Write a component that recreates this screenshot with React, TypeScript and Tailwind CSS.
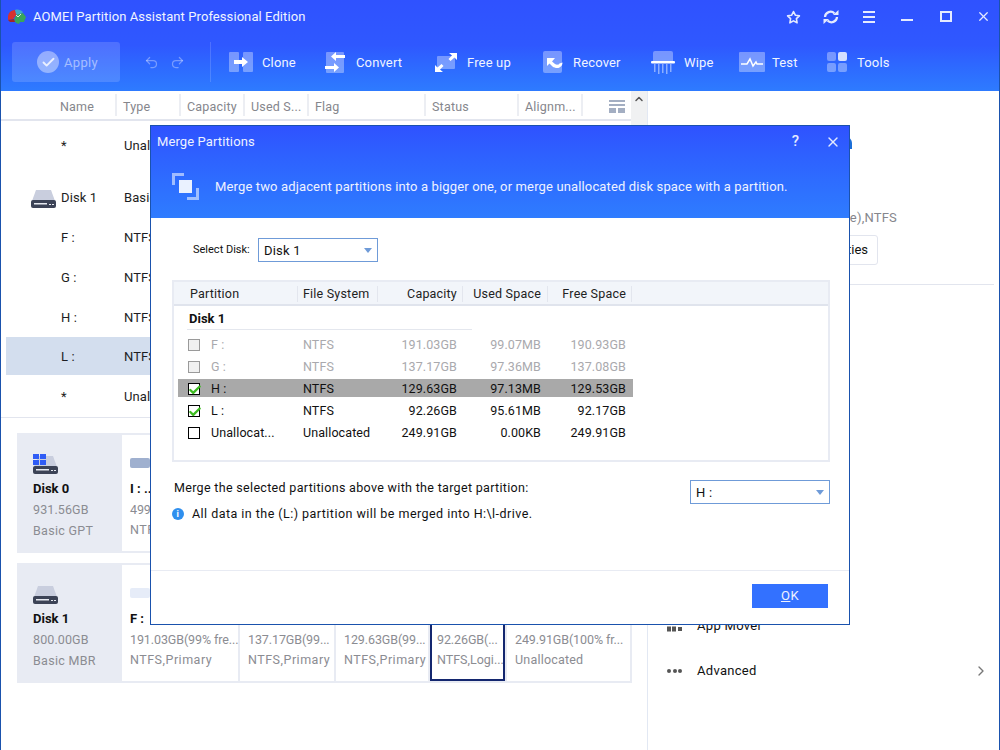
import React from "react";
import { Check, ChevronRight, ChevronUp, Redo2, Undo2, X } from "lucide-react";

const FONT = "font-['Roboto','Liberation_Sans',sans-serif]";

function Logo() {
  return (
    <svg width="20" height="16" viewBox="0 0 20 16" className="ml-[7px]">
      <path d="M1 8C1 4 4 1 8 1l2 4-4 5-5 1z" fill="#d8322f" />
      <path d="M8 1c3-1 6 0 8 2l-4 4-3-2z" fill="#3fa7c9" />
      <path d="M9 6l7-2 3 4-2 5-4 0-1 2-3-1-2-3z" fill="#3aa55a" />
      <path d="M1 11l6-1 1 3H3z" fill="#a32527" />
      <path d="M9 6l2 2 3-3" fill="none" stroke="#fff" strokeWidth="0.8" />
    </svg>
  );
}

function CloneIcon() {
  return (
    <svg width="24" height="20" viewBox="0 0 24 20">
      <rect x="0" y="0" width="10" height="20" rx="1" fill="#fff" fillOpacity="0.35" />
      <rect x="14" y="0" width="10" height="20" rx="1" fill="#fff" fillOpacity="0.35" />
      <path d="M5 8h8V5l6 5-6 5v-3H5z" fill="#fff" />
    </svg>
  );
}

function ConvertIcon() {
  return (
    <svg width="20" height="22" viewBox="0 0 20 22">
      <rect x="1" y="1" width="18" height="21" rx="1" fill="#fff" fillOpacity="0.35" />
      <path d="M20 4h-9V1L6 5.500 11 10V7h9z" fill="#fff" />
      <path d="M0 15h9v-3l5 4.500L9 21v-3H0z" fill="#fff" />
    </svg>
  );
}

function FreeUpIcon() {
  return (
    <svg width="22" height="19" viewBox="0 0 22 19">
      <rect x="2" y="3" width="18" height="13" rx="1" fill="#fff" fillOpacity="0.35" />
      <path d="M14 0h8v7l-2.500-2.500-4 3.500-2-2 3.500-3.500z" fill="#fff" />
      <path d="M8 19H0v-7l2.500 2.500 4-3.500 2 2L5 16.500z" fill="#fff" />
    </svg>
  );
}

function RecoverIcon() {
  return (
    <svg width="20" height="22" viewBox="0 0 20 22">
      <rect x="0" y="0" width="19" height="22" rx="2" fill="#fff" fillOpacity="0.35" />
      <path d="M4 7v8l2.500-2.500 3 3c2 1.500 5 2 7 1 2-1 3-3 3-5l-3 1c-1 1.500-3 1.500-4.500.5l-3-2.500L12 7z" fill="#fff" />
    </svg>
  );
}

function WipeIcon() {
  return (
    <svg width="24" height="23" viewBox="0 0 24 23">
      <path d="M2 2a2 2 0 0 1 2-2h16a2 2 0 0 1 2 2v8H2z" fill="#fff" fillOpacity="0.35" />
      <rect x="0" y="10" width="24" height="2.500" rx="1" fill="#fff" />
      <g fill="#fff" fillOpacity="0.45">
        <rect x="3" y="13" width="1.500" height="8" />
        <rect x="7" y="13" width="1.500" height="10" />
        <rect x="11" y="13" width="1.500" height="9" />
        <rect x="15" y="13" width="1.500" height="10" />
        <rect x="19" y="13" width="1.500" height="8" />
      </g>
    </svg>
  );
}

function TestIcon() {
  return (
    <svg width="26" height="20" viewBox="0 0 26 20">
      <rect x="0" y="0" width="26" height="20" rx="1" fill="#fff" fillOpacity="0.35" />
      <path d="M2 12h6l3-5 3 7 3-4 1 2h6" fill="none" stroke="#fff" strokeWidth="1.500" />
    </svg>
  );
}

function ToolsIcon() {
  return (
    <svg width="20" height="20" viewBox="0 0 20 20">
      <rect x="0" y="0" width="9" height="9" rx="2" fill="#fff" fillOpacity="0.35" />
      <rect x="11" y="0" width="9" height="9" rx="2" fill="#fff" fillOpacity="0.8" />
      <rect x="0" y="11" width="9" height="9" rx="2" fill="#fff" fillOpacity="0.35" />
      <rect x="11" y="11" width="9" height="9" rx="2" fill="#fff" fillOpacity="0.35" />
    </svg>
  );
}

function RefreshIcon() {
  return (
    <svg width="16" height="14" viewBox="0 0 16 14" fill="none" stroke="#e4eaff" strokeWidth="2.200">
      <path d="M2 7a5.500 5.500 0 0 1 9.500-3.500" />
      <path d="M14 7a5.500 5.500 0 0 1-9.500 3.500" />
      <path d="M10 5h5.500V0z" fill="#e4eaff" stroke="none" />
      <path d="M6 9H.5v5z" fill="#e4eaff" stroke="none" />
    </svg>
  );
}

function StarIcon() {
  return (
    <svg width="15" height="14" viewBox="0 0 15 14" fill="none" stroke="#e4eaff" strokeWidth="1.600">
      <path d="M7.500 1.500l1.800 3.700 4.100.6-3 2.900.7 4.100-3.600-1.900-3.600 1.900.7-4.100-3-2.900 4.100-.6z" strokeLinejoin="round" />
    </svg>
  );
}

function ToolItem({ icon, label, className }: { icon: React.ReactNode; label: string; className: string }) {
  return (
    <div className={`flex items-center ${className}`}>
      {icon}
      <span className="mt-[2px] text-[13px] tracking-[0.15px] text-[#f0f4ff]">{label}</span>
    </div>
  );
}

function DriveIcon({ windows }: { windows?: boolean }) {
  return (
    <svg width="25" height="20" viewBox="0 0 25 20">
      <path d="M5 2h15l4 11H1z" fill="#c9cede" />
      <path d="M0 14a2 2 0 0 1 2-2h21a2 2 0 0 1 2 2v4a2 2 0 0 1-2 2H2a2 2 0 0 1-2-2z" fill="#3c4356" />
      <rect x="3" y="15" width="13" height="1.500" fill="#e6e9f0" />
      <rect x="18" y="16" width="2" height="1" fill="#e6e9f0" />
      <rect x="21" y="16" width="2" height="1" fill="#e6e9f0" />
      {windows && (
        <g fill="#2f5cf5">
          <rect x="0" y="0" width="6" height="5" />
          <rect x="7" y="0" width="6" height="5" />
          <rect x="0" y="6" width="6" height="5" />
          <rect x="7" y="6" width="6" height="5" />
        </g>
      )}
    </svg>
  );
}

function HeaderCell({ label, className }: { label: string; className: string }) {
  return (
    <div className={`flex h-[22px] items-center border-r-2 border-[#eceef3] pl-1.5 pt-[4px] text-[12.5px] tracking-[0.2px] text-[#85868c] ${className}`}>
      <span className="whitespace-nowrap">{label}</span>
    </div>
  );
}

function ListRow({ name, type, icon, active, className = "" }: { name: string; type: string; icon?: boolean; active?: boolean; className?: string }) {
  return (
    <div className={`ml-[5px] flex items-center pt-[2px] text-[13px] tracking-[0.1px] text-[#1d1d22] ${active ? "bg-[#d3deee]" : ""} ${className}`}>
      <div className="flex w-[55px] justify-end pr-[5px]">{icon && <DriveIcon />}</div>
      <span className="w-[63px]">{name}</span>
      <span>{type}</span>
    </div>
  );
}

function DiskTile({ bar, name, size, type, typeClass = "tracking-[0.5px]", className = "" }: { bar: string; name: string; size: string; type: string; typeClass?: string; className?: string }) {
  return (
    <div className={`flex min-w-0 flex-col overflow-hidden bg-white ${className}`}>
      <div className={`h-[10px] w-[20px] shrink-0 rounded-[2px] ${bar}`} />
      <div className="mt-[13px] text-[13px] font-bold leading-[16px] text-[#111]">{name}</div>
      <div className="mt-[5px] whitespace-nowrap text-[12.5px] leading-[16px] tracking-[-0.1px] text-[#8b8c92]">{size}</div>
      <div className={`mt-[4px] whitespace-nowrap text-[12.5px] leading-[16px] text-[#8b8c92] ${typeClass}`}>{type}</div>
    </div>
  );
}

function DiskCard({ name, size, kind, windows, className = "", children }: { name: string; size: string; kind: string; windows?: boolean; className?: string; children: React.ReactNode }) {
  return (
    <div className={`flex h-[120px] gap-0.5 border-2 border-[#e8ebf3] bg-[#e8ebf3] ${className}`}>
      <div className="flex w-[101px] shrink-0 flex-col pl-[14px] pt-[19px]">
        <DriveIcon windows={windows} />
        <div className="mt-[7px] text-[13px] font-bold leading-[16px] text-[#111]">{name}</div>
        <div className="mt-[5px] text-[12.5px] leading-[16px] tracking-[0.1px] text-[#8b8c92]">{size}</div>
        <div className="mt-[5px] text-[12.5px] leading-[16px] tracking-[0.3px] text-[#8b8c92]">{kind}</div>
      </div>
      {children}
    </div>
  );
}

function Box({ state }: { state: "off" | "on" | "disabled" }) {
  return (
    <div className={`relative h-3 w-3 border ${state === "disabled" ? "border-[#9a9a9a] bg-[#f0f0f0]" : "border-black bg-white"}`}>
      {state === "on" && <Check size={14} strokeWidth={4} className="absolute -left-[1px] -top-[1px] text-[#3dbb21]" />}
    </div>
  );
}

const partitions = [
  { name: "F :", fs: "NTFS", cap: "191.03GB", used: "99.07MB", free: "190.93GB", state: "disabled" as const },
  { name: "G :", fs: "NTFS", cap: "137.17GB", used: "97.36MB", free: "137.08GB", state: "disabled" as const },
  { name: "H :", fs: "NTFS", cap: "129.63GB", used: "97.13MB", free: "129.53GB", state: "on" as const, hl: true },
  { name: "L :", fs: "NTFS", cap: "92.26GB", used: "95.61MB", free: "92.17GB", state: "on" as const },
  { name: "Unallocat...", fs: "Unallocated", cap: "249.91GB", used: "0.00KB", free: "249.91GB", state: "off" as const },
];

function PartitionRow({ p }: { p: (typeof partitions)[number] }) {
  const tone = p.state === "disabled" ? "text-[#a9a9ad]" : "text-[#111]";
  return (
    <div className="flex h-[22px] items-center">
      <div className={`ml-[4px] flex h-[18px] w-[455px] items-center pt-[2px] text-[12.5px] tracking-[0.1px] ${tone} ${p.hl ? "bg-[#a9a9a9]" : ""}`}>
        <div className="ml-[10px] w-[23px]">
          <Box state={p.state} />
        </div>
        <span className="w-[92px]">{p.name}</span>
        <span className="w-[74px]">{p.fs}</span>
        <span className="w-[80px] text-right">{p.cap}</span>
        <span className="w-[84px] text-right">{p.used}</span>
        <span className="w-[85px] text-right">{p.free}</span>
      </div>
    </div>
  );
}

function Dropdown({ label, className }: { label: string; className: string }) {
  return (
    <div className={`flex items-center justify-between border border-[#6f9bd8] bg-white px-[5px] text-[13px] tracking-[0.2px] text-[#111] ${className}`}>
      <span className="pt-[2px]">{label}</span>
      <span className="h-0 w-0 border-x-[4px] border-t-[5px] border-x-transparent border-t-[#6f9bd8]" />
    </div>
  );
}

function MergeDialog() {
  return (
    <div className="absolute left-[149px] top-[125px] flex h-[500px] w-[700px] flex-col border border-[#1a52ad] bg-white">
      <div className="h-[92px] shrink-0 bg-gradient-to-b from-[#2f52ff] to-[#2f7cff]">
        <div className="flex h-[31px] items-center pl-1.5 pr-[8px] text-white">
          <span className="text-[13px] tracking-[0.11px] text-[#eef2ff]">Merge Partitions</span>
          <span className="ml-auto mr-[26px] text-[15px] font-medium leading-none text-[#e4eaff]">?</span>
          <X size={16} strokeWidth={2} className="text-[#e4eaff]" />
        </div>
        <div className="mt-[16px] flex items-center pl-[21px]">
          <svg width="27" height="27" viewBox="0 0 27 27">
            <path d="M0 12V0h12v3H3v9z" fill="#fff" fillOpacity="0.55" />
            <path d="M27 15v12H15v-3h9v-9z" fill="#fff" fillOpacity="0.55" />
            <rect x="7" y="7" width="13" height="13" fill="#fff" fillOpacity="0.9" />
          </svg>
          <span className="ml-4 text-[13px] tracking-[0.14px] text-[#eef2ff]">Merge two adjacent partitions into a bigger one, or merge unallocated disk space with a partition.</span>
        </div>
      </div>
      <div className="flex items-center pl-[42px] pt-5">
        <span className="w-[65px] text-[11px] text-[#111]">Select Disk:</span>
        <Dropdown label="Disk 1" className="h-6 w-[120px]" />
      </div>
      <div className="ml-[21px] mt-[18px] h-[182px] w-[658px] border-2 border-[#e8ebf3]">
        <div className="flex h-[24px] items-center border-b-2 border-[#e0e4ed] bg-[#f2f5fa] pt-[1px] text-[12.5px] tracking-[0.2px] text-[#222]">
          <div className="h-[16px] w-[123px] pl-[16px] leading-[16px]">Partition</div>
          <div className="h-[16px] w-[80px] border-l border-[#e3e6ee] pl-[5px] leading-[16px]">File System</div>
          <div className="h-[16px] w-[85px] border-l border-[#e3e6ee] pr-[5px] text-right leading-[16px]">Capacity</div>
          <div className="h-[16px] w-[85px] border-l border-[#e3e6ee] pr-[6px] text-right leading-[16px]">Used Space</div>
          <div className="h-[16px] w-[85px] border-x border-[#e3e6ee] pr-[5px] text-right leading-[16px]">Free Space</div>
        </div>
        <div className="ml-[13px] h-[24px] w-[285px] border-b border-[#e4e7ee] pl-[2px] text-[13px] font-bold leading-[26px] text-[#111]">Disk 1</div>
        <div className="pt-[3px]">
          {partitions.map((p) => (
            <PartitionRow key={p.name} p={p} />
          ))}
        </div>
      </div>
      <div className="relative">
        <div className="ml-[23px] mt-[17px] text-[12.5px] tracking-[0.32px] text-[#111]">Merge the selected partitions above with the target partition:</div>
        <Dropdown label="H :" className="absolute left-[539px] top-[18px] h-[24px] w-[140px]" />
        <div className="ml-[21px] mt-[7px] flex items-center text-[12.5px] tracking-[0.46px] text-[#111]">
          <span className="flex h-[12px] w-[12px] items-center justify-center rounded-full bg-[#2f8fee] text-[9px] font-bold leading-none text-white">i</span>
          <span className="ml-2">{"All data in the (L:) partition will be merged into H:\\l-drive."}</span>
        </div>
      </div>
      <div className="mt-auto flex h-[54px] justify-end border-t border-[#e8ebf3] pr-[21px] pt-[13px]">
        <button className="h-6 w-[76px] bg-[#3371ff] text-[13px] tracking-[0.5px] text-[#eef2ff]">
          <span className="underline">O</span>K
        </button>
      </div>
    </div>
  );
}

export default function App() {
  return (
    <div className={`relative h-[750px] w-[1000px] overflow-hidden border-x border-[#1a52ad] bg-white ${FONT}`}>
      {/* title bar and toolbar */}
      <div className="-mx-px h-[91px] bg-gradient-to-b from-[#2f52ff] via-[#2f58ff] to-[#2e7bff]">
        <div className="flex h-[33px] items-center">
          <Logo />
          <span className="ml-[6px] text-[13px] tracking-[0.08px] text-[#f0f4ff]">AOMEI Partition Assistant Professional Edition</span>
          <div className="ml-auto flex items-center">
            <StarIcon />
            <span className="ml-[22px]"><RefreshIcon /></span>
            <span className="ml-[24px] flex w-3 flex-col gap-[3px]">
              <i className="h-0.5 bg-[#e4eaff]" />
              <i className="h-0.5 bg-[#e4eaff]" />
              <i className="h-0.5 bg-[#e4eaff]" />
            </span>
            <span className="ml-[26px] mt-[7px] h-0.5 w-3 bg-[#e4eaff]" />
            <span className="ml-[27px] h-[11px] w-[12px] border-2 border-[#e4eaff]" />
            <X size={15} strokeWidth={2} className="ml-[24px] mr-[9px] text-[#e4eaff]" />
          </div>
        </div>
        <div className="flex items-center pl-3 pt-[9px]">
          <div className="flex h-10 w-[108px] items-center rounded-[3px] bg-white/15 pl-[25px]">
            <span className="flex h-[22px] w-[22px] items-center justify-center rounded-full bg-white/40">
              <Check size={15} strokeWidth={3} className="text-white/80" />
            </span>
            <span className="ml-[5px] mt-[2px] text-[13px] tracking-[0.3px] text-white/50">Apply</span>
          </div>
          <Undo2 size={15} className="ml-[24px] text-white/35" />
          <Redo2 size={15} className="ml-[11px] text-white/35" />
          <div className="ml-[25px] h-10 w-px bg-white/15" />
          <ToolItem icon={<CloneIcon />} label="Clone" className="ml-[18px] w-[96px] gap-[9px]" />
          <ToolItem icon={<ConvertIcon />} label="Convert" className="w-[110px] gap-[11px]" />
          <ToolItem icon={<FreeUpIcon />} label="Free up" className="w-[108px] gap-[10px]" />
          <ToolItem icon={<RecoverIcon />} label="Recover" className="w-[108px] gap-[10px]" />
          <ToolItem icon={<WipeIcon />} label="Wipe" className="w-[88px] gap-[9px]" />
          <ToolItem icon={<TestIcon />} label="Test" className="w-[88px] gap-[7px]" />
          <ToolItem icon={<ToolsIcon />} label="Tools" className="gap-[10px]" />
        </div>
      </div>

      <div className="flex h-[659px]">
        {/* partition list and disk map */}
        <div className="w-[647px] shrink-0 border-r border-[#e2e8f3]">
          <div className="flex h-[326px]">
            <div className="w-[631px]">
              <div className="flex h-[30px] items-center border-b-2 border-[#e2e5ee]">
                <HeaderCell label="Name" className="w-[116px] pl-[59px]" />
                <HeaderCell label="Type" className="w-[64px]" />
                <HeaderCell label="Capacity" className="w-[64px]" />
                <HeaderCell label="Used S..." className="w-[64px]" />
                <HeaderCell label="Flag" className="w-[117px]" />
                <HeaderCell label="Status" className="w-[93px]" />
                <HeaderCell label="Alignm..." className="w-[64px]" />
                <svg width="16" height="13" viewBox="0 0 16 13" className="ml-[26px] mt-[2px]">
                  <rect width="16" height="2" fill="#a3aec2" />
                  <rect y="4" width="16" height="2" fill="#a3aec2" />
                  <rect y="8" width="7" height="5" fill="#a3aec2" />
                  <rect x="9" y="8" width="7" height="5" fill="#a3aec2" />
                </svg>
              </div>
              <ListRow name="*" type="Unallocated" className="mt-1 h-10" />
              <ListRow name="Disk 1" type="Basic MBR" icon className="mt-3 h-10" />
              <ListRow name="F :" type="NTFS" className="h-10" />
              <ListRow name="G :" type="NTFS" className="h-10" />
              <ListRow name="H :" type="NTFS" className="h-10" />
              <ListRow name="L :" type="NTFS" active className="h-[38px]" />
              <ListRow name="*" type="Unallocated" className="h-[42px]" />
            </div>
            <div className="flex w-4 justify-center bg-[#f0f1f2] pt-0.5">
              <ChevronUp size={12} strokeWidth={3} className="text-[#555]" />
            </div>
          </div>
          <div className="border-t border-[#e2e5ee] px-4 pt-[15px]">
            <div className="mr-[-1px]">
              <DiskCard name="Disk 0" size="931.56GB" kind="Basic GPT" windows>
                <DiskTile bar="bg-[#9fb0cf]" name="I : ..." size="499.00GB" type="NTFS,Primary" className="flex-1 pl-2 pt-[23px]" />
              </DiskCard>
              <DiskCard name="Disk 1" size="800.00GB" kind="Basic MBR" className="mt-2.5">
                <DiskTile bar="bg-[#e6ecf8]" name="F :" size="191.03GB(99% fre..." type="NTFS,Primary" className="w-[116px] shrink-0 pl-2 pt-[23px]" />
                <DiskTile bar="bg-[#e6ecf8]" name="G :" size="137.17GB(99..." type="NTFS,Primary" className="w-[94px] shrink-0 pl-2 pt-[23px]" />
                <DiskTile bar="bg-[#e6ecf8]" name="H :" size="129.63GB(99..." type="NTFS,Primary" className="w-[92px] shrink-0 pl-2 pt-[23px]" />
                <DiskTile bar="bg-[#e6ecf8]" name="L :" size="92.26GB(..." type="NTFS,Logi..." typeClass="tracking-[0px]" className="w-[75px] shrink-0 border-2 border-[#14276f] pl-[5px] pt-[21px]" />
                <DiskTile bar="bg-[#e6ecf8]" name="*" size="249.91GB(100% fr..." type="Unallocated" typeClass="tracking-[0.2px]" className="min-w-0 flex-1 pl-[8px] pt-[23px]" />
              </DiskCard>
            </div>
          </div>
        </div>

        {/* right panel */}
        <div className="flex flex-1 flex-col pt-[46px]">
          <div className="ml-[160px] h-[12px] w-[44px] rounded-t-md bg-[#1c6fd8]" />
          <div className="mt-[61px] flex h-4 items-center justify-end pr-[102px] text-[13px] leading-4 tracking-[0.2px] text-[#85868c]">
            (Active),NTFS
          </div>
          <div className="ml-[91px] mt-[9px] flex h-[30px] w-[139px] items-center justify-end rounded-[3px] border border-[#e2e5ee] pr-[9px] text-[13px] text-[#111]">
            Properties
          </div>
          <div className="mr-[5px] mt-[19px] border-b border-[#e2e5ee]" />
          <div className="mt-[318px] flex h-[45px] items-center pl-[19px] pr-[10px] text-[13px] tracking-[0.3px] text-[#111]">
            <svg width="15" height="12" viewBox="0 0 15 12" fill="#555">
              <rect width="4" height="5" />
              <rect x="5" width="4" height="5" />
              <rect y="6.500" width="4" height="5" />
              <rect x="5" y="6.500" width="4" height="5" />
              <rect x="11" y="7" width="4" height="4" />
            </svg>
            <span className="ml-[15px]">App Mover</span>
          </div>
          <div className="flex h-[45px] items-center pl-[19px] pr-[10px] text-[13px] tracking-[0.3px] text-[#111]">
            <span className="flex w-[15px] justify-between">
              <i className="h-1 w-1 rounded-full bg-[#555]" />
              <i className="h-1 w-1 rounded-full bg-[#555]" />
              <i className="h-1 w-1 rounded-full bg-[#555]" />
            </span>
            <span className="ml-[15px]">Advanced</span>
            <ChevronRight size={16} className="ml-auto text-[#777]" />
          </div>
        </div>
      </div>

      <MergeDialog />
    </div>
  );
}
